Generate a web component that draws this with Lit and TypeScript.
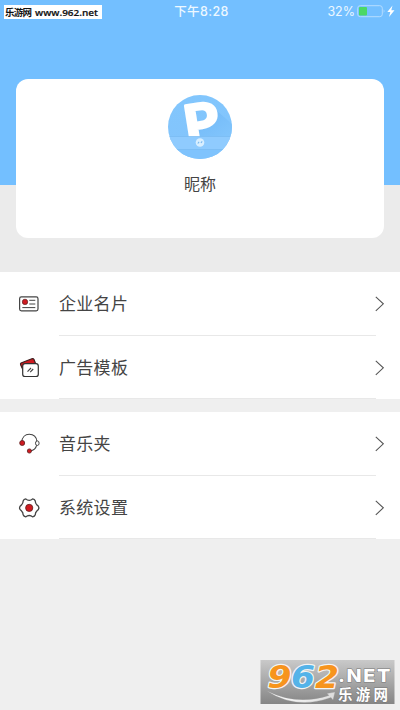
import { LitElement, html, css, svg } from "lit";
import { customElement, property } from "lit/decorators.js";

const icons: Record<string, unknown> = {
  card: svg`
    <rect x="1.6" y="3.900" width="18.4" height="14" rx="1.8" fill="#fff" stroke="#444" stroke-width="1.200"/>
    <circle cx="7" cy="8.900" r="2.700" fill="#cf1a20" stroke="#5a2020" stroke-width=".7"/>
    <path d="M11.300 7.300H17.300M11.300 11H17.300M4.300 14.600H17.300" stroke="#444"/>`,
  template: svg`
    <path d="M3 6 13.800 1.700Q15.300 1.200 16 2.500L18.500 9 6 15 2.600 7.700Q2.200 6.500 3 6Z" fill="#cf1a20" stroke="#3d2020" stroke-width="1.200"/>
    <rect x="4.700" y="6.700" width="15.600" height="12.800" rx="2.300" fill="#fff" stroke="#333" stroke-width="1.200"/>
    <path d="M9.500 14.700 13 11M12.200 15.200 15.200 12" stroke="#444" stroke-width="1.100"/>`,
  music: svg`
    <path d="M3.900 8.700C4.200 4.200 7.100 1.300 11.200 1.300c4.500 0 7.300 3 7.700 7.200M18.700 12.100c-.8 3.200-3 5.200-6.500 5.900" fill="none" stroke="#444" stroke-width="1.100"/>
    <ellipse cx="19.300" cy="10.200" rx="1.800" ry="2.300" fill="#fff" stroke="#444"/>
    <circle cx="4.200" cy="10" r="2.500" fill="#cf1a20" stroke="#5a2020" stroke-width=".8"/>
    <circle cx="11.400" cy="18" r="2.100" fill="#cf1a20" stroke="#5a2020" stroke-width=".8"/>`,
  gear: svg`
    <path d="M7.800 1.900C9 3.100 10 3.300 11.200 3.300s2.200-.2 3.400-1.400Q16.600 2.300 17.300 4c-.1 1.900.6 3 1.600 3.900Q20.800 9 20.900 10.900 20.800 12.800 18.900 13.900C17.900 14.800 17.200 15.900 17.300 17.800Q16.600 19.500 14.600 19.900C13.400 18.700 12.400 18.500 11.200 18.500s-2.200.2-3.400 1.400Q5.800 19.500 5.100 17.800C5.200 15.900 4.500 14.800 3.500 13.900 1.900 12.800 1.500 12.300 1.500 10.900S1.900 9 3.500 7.900C4.500 7 5.200 5.900 5.100 4Q5.800 2.300 7.800 1.900Z" fill="#fff" stroke="#444" stroke-width="1.300" stroke-linejoin="round"/>
    <circle cx="11.200" cy="10.900" r="3.600" fill="#cf1a20" stroke="#5a2020" stroke-width=".8"/>`,
};

@customElement("menu-row")
class MenuRow extends LitElement {
  @property() icon = "";
  @property() label = "";

  static styles = css`
    :host { display: flex; height: 64px; align-items: stretch; background: #fff; }
    .icon { width: 22px; height: 22px; margin: 21px 0 0 18px; flex: none; }
    .body { margin-left: 19px; width: 317px; flex: none; box-sizing: border-box; padding-bottom: 2px;
      box-shadow: inset 0 -1px #e8e8e8; display: flex; align-items: center;
      font-size: 17px; letter-spacing: .3px; color: #444; }
    :host(:last-child) { height: 63.500px; }
    :host(:last-child) .body { padding-bottom: 1px; }
    .chevron { width: 10px; height: 16px; margin: 24px 0 0 -1px; flex: none; }
  `;

  render() {
    return html`
      <svg class="icon" viewBox="0 0 22 22" fill="none">${icons[this.icon]}</svg>
      <div class="body">${this.label}</div>
      <svg class="chevron" viewBox="0 0 10 16"><path d="M.8 .8 8.300 7.800 .8 14.800" fill="none" stroke="#555" stroke-width="1.100"/></svg>
    `;
  }
}

@customElement("app-root")
class AppRoot extends LitElement {
  static styles = css`
    :host { display: block; position: relative; width: 400px; height: 710px; overflow: hidden;
      background: #efefef; font-family: "Liberation Sans", "Noto Sans CJK SC", sans-serif; }
    .head { height: 271.500px; box-sizing: border-box; background: linear-gradient(#73bfff 185px, #ebebeb 185px); }
    .status { height: 79px; box-sizing: border-box; display: grid; grid-template-columns: 1fr auto 1fr; color: #edf8ff; }
    .site { width: 98px; height: 14px; margin: 5px 0 0 4px; background: #fff; }
    .site svg { display: block; width: 98px; height: 14px; }
    .time { height: 24px; font: 500 12.500px/23px Inter, "Noto Sans CJK SC", sans-serif; padding-left: 3px; letter-spacing: .4px; }
    .power { display: flex; justify-content: flex-end; align-items: center; height: 23px; padding-right: 4px;
      font: 12.500px Inter, sans-serif; gap: 2px; }
    .power svg { width: 39px; height: 14px; margin-top: -1px; }
    .profile { width: 368px; height: 159px; margin: 0 auto; background: #fff; border-radius: 12px;
      display: flex; flex-direction: column; align-items: center; color: #444; font-size: 16px; line-height: 24px; }
    .avatar { width: 66px; height: 66px; margin: 15px 0 13px; }
    .group { margin-bottom: 12.500px; }
    .brand { position: absolute; left: 260px; top: 660px; width: 135px; height: 44px; overflow: visible; }
  `;

  render() {
    return html`
      <div class="head">
        <div class="status">
          <div class="site">
            <svg viewBox="0 0 98 14">
              <text x="1" y="11" font-size="9.500" font-weight="700" fill="#111" font-family="Noto Sans CJK SC" textLength="27">乐游网</text>
              <text x="31" y="11" font-size="9.500" font-weight="600" fill="#111" font-family="Open Sans" stroke="#111" stroke-width=".2" textLength="63" lengthAdjust="spacingAndGlyphs">www.962.net</text>
            </svg>
          </div>
          <div class="time">下午8:28</div>
          <div class="power">
            <span>32%</span>
            <svg viewBox="0 0 39 14">
              <rect x=".7" y="1.700" width="24.600" height="11" rx="2.500" fill="none" stroke="#b5ddff"/>
              <rect x="2" y="3" width="8" height="8.500" rx="1" fill="#4bd866"/>
              <path d="M26.700 5.300q1.800 1.800 0 3.600Z" fill="#b5ddff"/>
              <path d="M35.500 1.500 30.300 7.900h3L32 13 37.500 6.200h-3.200Z" fill="#fff"/>
            </svg>
          </div>
        </div>
        <div class="profile">
          <svg class="avatar" viewBox="0 0 66 66">
            <defs>
              <linearGradient id="sky" x1="0" y1="0" x2="0" y2="1"><stop stop-color="#82c6fd"/><stop offset="1" stop-color="#83c4fb"/></linearGradient>
              <linearGradient id="shade" x1="0" y1="0" x2="1" y2="1"><stop stop-color="#6fb8f7"/><stop offset="1" stop-color="#82c5fc"/></linearGradient>
              <clipPath id="disc"><circle cx="33" cy="33" r="32"/></clipPath>
            </defs>
            <g clip-path="url(#disc)">
              <rect width="66" height="66" fill="url(#sky)"/>
              <path d="M49 16 66 31V42H24Z" fill="url(#shade)"/>
              <text transform="translate(20 49.500) rotate(-9)" font-family="Lato" font-weight="700" font-size="52" textLength="34.500" lengthAdjust="spacingAndGlyphs" fill="#fff" stroke="#fff" stroke-width="3" stroke-linejoin="round">P</text>
              <rect y="42.500" width="66" height="13" fill="#8fcbfe"/>
              <path d="M0 42.500H66M0 55.500H66" stroke="#79baf1" stroke-width=".7"/>
              <rect y="56" width="66" height="10" fill="#7fc3fd"/>
            </g>
            <circle cx="33" cy="48.500" r="4.300" fill="#d9efff"/>
            <path d="M30.800 49.500l1.300-1.600M33.900 49l1.300-1.600" fill="none" stroke="#77b8ef" stroke-width="1.100"/>
          </svg>
          <span>昵称</span>
        </div>
      </div>
      <div class="group">
        <menu-row icon="card" label="企业名片"></menu-row>
        <menu-row icon="template" label="广告模板"></menu-row>
      </div>
      <div class="group">
        <menu-row icon="music" label="音乐夹"></menu-row>
        <menu-row icon="gear" label="系统设置"></menu-row>
      </div>
      <svg class="brand" viewBox="0 0 135 44">
        <defs>
          <linearGradient id="steel" x1="0" y1="0" x2="0" y2="1"><stop stop-color="#c9c9c9"/><stop offset="1" stop-color="#858585"/></linearGradient>
          <linearGradient id="swoosh"><stop stop-color="#fff"/><stop offset="1" stop-color="#ddd"/></linearGradient>
        </defs>
        <rect x=".5" width="134" height="44" fill="url(#steel)"/>
        <g font-family="DejaVu Sans" font-weight="700" font-style="oblique" font-size="32" stroke="#f4f4f4" stroke-width="2.400" paint-order="stroke" stroke-linejoin="round">
          <text x="7.500" y="27.500" textLength="24" lengthAdjust="spacingAndGlyphs" fill="#f7941d">9</text>
          <text x="31" y="27.500" textLength="24" lengthAdjust="spacingAndGlyphs" fill="#55b3e8">6</text>
          <text x="55" y="27.500" textLength="24" lengthAdjust="spacingAndGlyphs" fill="#f7941d">2</text>
        </g>
        <path d="M7 31Q37 46 69 35.500L67 33.500 75 32 73 40 71 37.500Q36 50 7 31Z" fill="url(#swoosh)" stroke="#999" stroke-width=".3"/>
        <g fill="#fff" stroke="#777" stroke-width="1" paint-order="stroke">
          <text x="78" y="22" font-family="Inter" font-weight="800" font-size="18" letter-spacing="1.500" textLength="54" lengthAdjust="spacingAndGlyphs">.NET</text>
          <text x="78" y="39.500" font-family="Noto Sans CJK SC" font-weight="700" font-size="14.500" textLength="50">乐游网</text>
        </g>
      </svg>
    `;
  }
}
